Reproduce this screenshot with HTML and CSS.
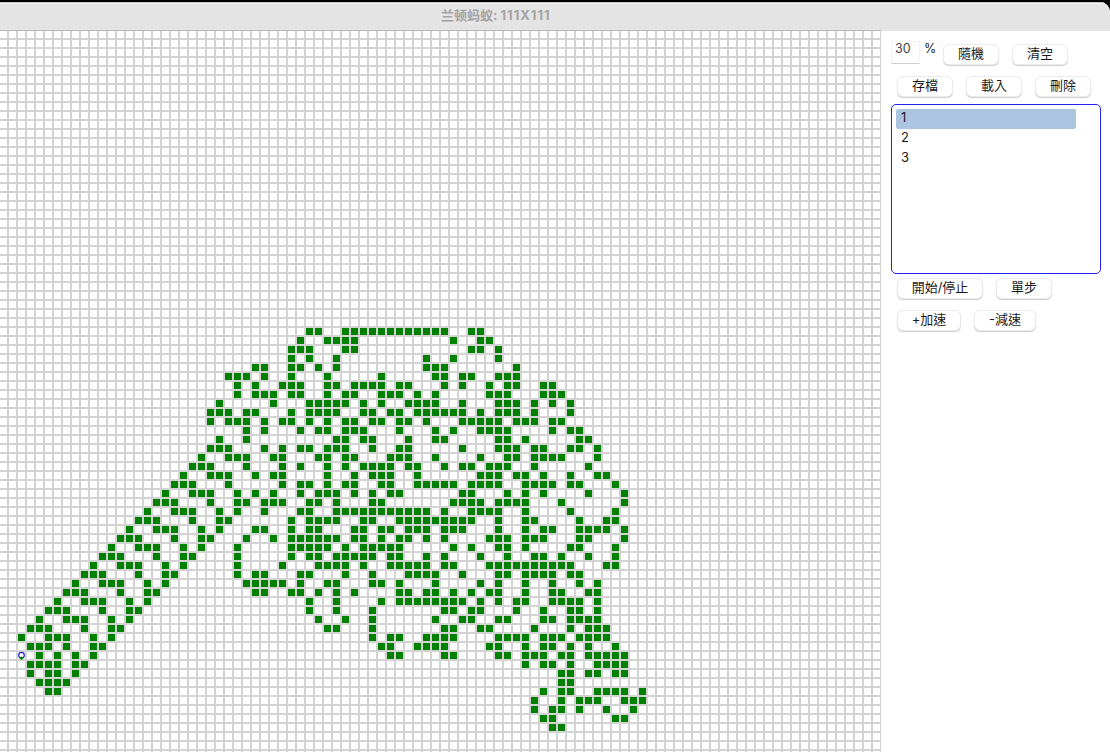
FILE: index.html
```html
<!DOCTYPE html>
<html lang="zh-Hant">
<head>
<meta charset="utf-8">
<title>兰顿蚂蚁: 111X111</title>
<link rel="stylesheet" href="styles.css">
</head>
<body>
<div class="window">
  <header class="titlebar">兰顿蚂蚁: <span class="size">111X111</span></header>
  <main class="content">
    <canvas class="board" id="board" width="881" height="721"></canvas>
    <aside class="panel">
      <div class="row row-top">
        <span class="density">30</span><span class="unit">%</span>
        <button class="btn">隨機</button><button class="btn">清空</button>
      </div>
      <div class="row row-files">
        <button class="btn">存檔</button><button class="btn">載入</button><button class="btn">刪除</button>
      </div>
      <ul class="slots">
        <li class="slot slot-active">1</li>
        <li class="slot">2</li>
        <li class="slot">3</li>
      </ul>
      <div class="row">
        <button class="btn btn-run">開始/停止</button><button class="btn">單步</button>
      </div>
      <div class="row">
        <button class="btn btn-fast">+加速</button><button class="btn btn-slow">-減速</button>
      </div>
    </aside>
  </main>
</div>
<script src="ant.js"></script>
</body>
</html>
```
FILE: styles.css
```css
* { box-sizing: border-box; }

body {
  margin: 0;
  background: #000;
  font-family: Inter, "Noto Sans CJK TC", sans-serif;
  overflow: hidden;
}

.window {
  margin-top: 2px;
  height: 750px;
  background: #fff;
  border-top-right-radius: 10px;
  overflow: hidden;
}

.titlebar {
  height: 29px;
  padding-left: 441px;
  background: #e4e4e4;
  border-top: 1px solid #c4c4c4;
  box-shadow: inset 0 1px 0 #f4f4f2;
  font: bold 13px/25px Inter, "Noto Sans CJK SC", sans-serif;
  color: #a3a3a3;
}

.size { letter-spacing: 1px; }

.content { display: flex; }

.board {
  display: block;
  margin-top: -1px;
}

.panel {
  flex: 1;
  padding: 10px 9px 0 10px;
  color: #1a1a1a;
}

.row {
  display: flex;
  gap: 13px;
  padding-left: 6px;
  margin-bottom: 10px;
}

.row-top {
  gap: 0;
  padding-left: 0;
  margin-bottom: 11px;
}

.row-top .btn { margin: 3px 13px 0 0; }

.row-files { margin-bottom: 6px; }

.density {
  width: 29px;
  height: 23px;
  padding-left: 3px;
  border: 1px solid #f3f3f3;
  border-bottom-color: #cfcfcf;
  font-size: 12.5px;
  line-height: 14px;
  color: #444;
}

.unit {
  width: 23px;
  padding-left: 4px;
  font-size: 12.5px;
  line-height: 15px;
}

.btn {
  height: 21px;
  width: 56px;
  padding: 0 0 2px;
  border: 1px solid #ebebeb;
  border-radius: 6px;
  background: #fff;
  box-shadow: 0 1px 1px #cbcbcb;
  font: 13px/17px Inter, "Noto Sans CJK TC", sans-serif;
  color: #1a1a1a;
  white-space: nowrap;
  margin-bottom: 1px;
}

.btn-run { width: 86px; }
.btn-fast { width: 64px; }
.btn-slow { width: 62px; }

.slots {
  list-style: none;
  height: 170px;
  margin: 0 0 4px;
  padding: 4px;
  border: 1px solid #2222f0;
  border-radius: 5px;
}

.slot {
  width: 180px;
  height: 20px;
  padding-left: 5px;
  font-size: 13px;
  line-height: 17px;
}

.slot-active {
  background: #abc4e0;
  border-radius: 2px;
}
```
FILE: ant.js
```js
// Langton's ant on a 111x111 board, started at the centre.
const SIZE = 111;
const STEPS = 11148;
const CELL = 9;
const SCROLL_X = 13;
const TOP = 1;
const DIRS = [[0, -1], [1, 0], [0, 1], [-1, 0]];

const grid = Array.from({ length: SIZE }, () => new Uint8Array(SIZE));
let x = 55, y = 55, dir = 0;

for (let i = 0; i < STEPS; i++) {
  dir = (dir + (grid[y][x] ? 3 : 1)) % 4;
  grid[y][x] ^= 1;
  x += DIRS[dir][0];
  y += DIRS[dir][1];
}

const board = document.getElementById('board');
board.height = 722;
const ctx = board.getContext('2d');
ctx.fillStyle = '#fff';
ctx.fillRect(0, 0, board.width, board.height);

// grid lines, with a darker rule along the top edge
ctx.fillStyle = '#d3d3d3';
for (let gx = CELL - 2; gx < board.width; gx += CELL) ctx.fillRect(gx, 0, 2, board.height);
for (let gy = CELL - 2 + TOP; gy < board.height; gy += CELL) ctx.fillRect(0, gy, board.width, 2);
ctx.fillStyle = '#b9b9b9';
ctx.fillRect(0, 0, board.width, 1);

// live cells
ctx.fillStyle = '#008000';
for (let r = 0; r < SIZE; r++) {
  for (let c = SCROLL_X; c < SIZE; c++) {
    if (grid[r][c]) ctx.fillRect((c - SCROLL_X) * CELL, r * CELL + TOP, 7, 7);
  }
}

// ant: ring for the body, dot for the heading
const ax = (x - SCROLL_X) * CELL + 3.5;
const ay = y * CELL + 3.5 + TOP;
ctx.strokeStyle = '#1c1ccc';
ctx.lineWidth = 1.2;
ctx.beginPath();
ctx.arc(ax, ay - 0.3, 2.8, 0, Math.PI * 2);
ctx.stroke();
ctx.fillStyle = '#008000';
ctx.beginPath();
ctx.arc(ax + DIRS[dir][0] * 2.6, ay + DIRS[dir][1] * 2.6, 1.6, 0, Math.PI * 2);
ctx.fill();
```
